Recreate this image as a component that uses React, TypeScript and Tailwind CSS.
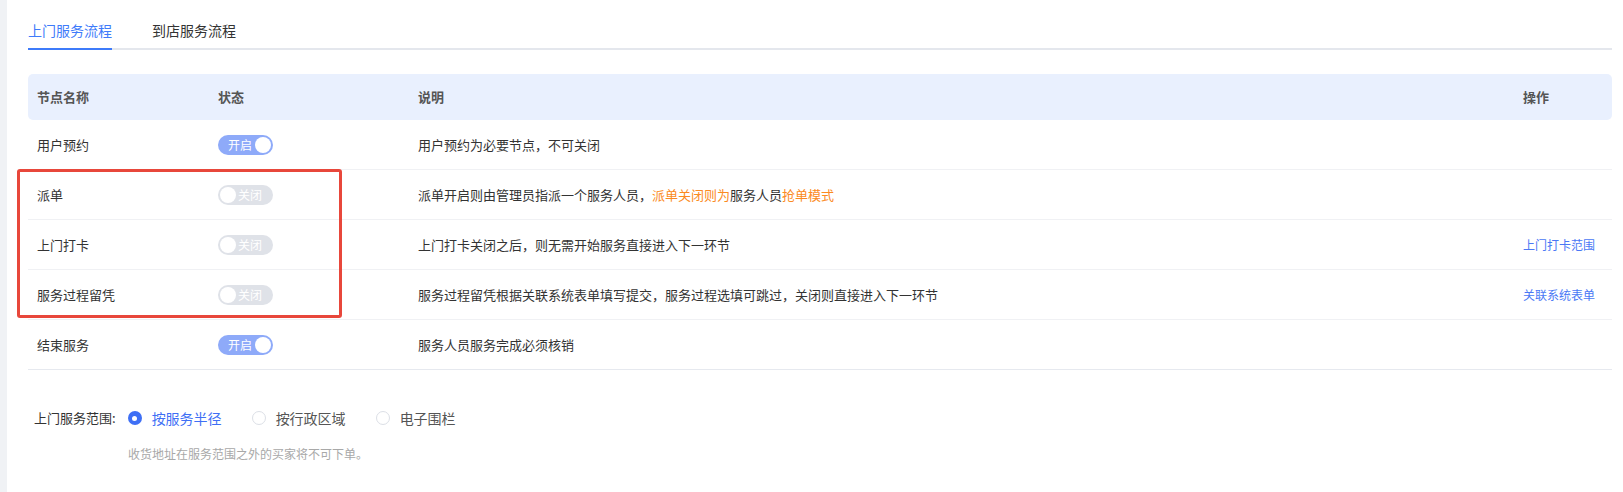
import React from "react";

const font = { fontFamily: '"Noto Sans CJK SC", "Noto Sans", sans-serif' };

function Toggle({ on }: { on: boolean }) {
  if (on) {
    return (
      <div className="flex h-[20px] w-[55px] items-center justify-between rounded-full bg-[#8eaaf9] pl-[10px] pr-[2px]">
        <span className="text-[12px] leading-none text-white">开启</span>
        <span className="h-[16px] w-[16px] rounded-full bg-white" />
      </div>
    );
  }
  return (
    <div className="flex h-[20px] w-[55px] items-center rounded-full bg-[#dfe2e8] pl-[2px]">
      <span className="h-[16px] w-[16px] rounded-full bg-white" />
      <span className="ml-[2px] text-[12px] leading-none text-white">关闭</span>
    </div>
  );
}

type Row = {
  name: string;
  on: boolean;
  desc: React.ReactNode;
  op?: string;
};

const rows: Row[] = [
  { name: "用户预约", on: true, desc: "用户预约为必要节点，不可关闭" },
  {
    name: "派单",
    on: false,
    desc: (
      <>
        派单开启则由管理员指派一个服务人员，
        <span className="text-[#fb8a22]">派单关闭则为</span>服务人员
        <span className="text-[#fb8a22]">抢单模式</span>
      </>
    ),
  },
  {
    name: "上门打卡",
    on: false,
    desc: "上门打卡关闭之后，则无需开始服务直接进入下一环节",
    op: "上门打卡范围",
  },
  {
    name: "服务过程留凭",
    on: false,
    desc: "服务过程留凭根据关联系统表单填写提交，服务过程选填可跳过，关闭则直接进入下一环节",
    op: "关联系统表单",
  },
  { name: "结束服务", on: true, desc: "服务人员服务完成必须核销" },
];

const cols = "grid grid-cols-[181px_200px_1fr_98px]";

function Radio({ label, checked }: { label: string; checked?: boolean }) {
  return (
    <div className="flex items-center">
      {checked ? (
        <span className="flex h-[14px] w-[14px] items-center justify-center rounded-full bg-[#3e6ff5]">
          <span className="h-[5px] w-[5px] rounded-full bg-white" />
        </span>
      ) : (
        <span className="h-[14px] w-[14px] rounded-full border border-[#dcdfe6] bg-white" />
      )}
      <span
        className={
          "ml-[10px] text-[14px] leading-[22px] " +
          (checked ? "text-[#3e6ff5]" : "text-[#555]")
        }
      >
        {label}
      </span>
    </div>
  );
}

export default function App() {
  return (
    <div className="flex min-h-[492px] bg-white" style={font}>
      <div className="w-[7px] shrink-0 bg-[#f0f2f5]" />
      <div className="flex-1 pl-[21px] pr-[11px]">
        {/* Tabs */}
        <div className="flex gap-[40px] border-b-2 border-[#e4e7ed] pt-[19px]">
          <div className="-mb-[2px] border-b-2 border-[#3e7bfa] pb-[7px] text-[14px] leading-[22px] text-[#3e7bfa]">
            上门服务流程
          </div>
          <div className="-mb-[2px] border-b-2 border-transparent pb-[7px] text-[14px] leading-[22px] text-[#333]">
            到店服务流程
          </div>
        </div>

        {/* Table */}
        <div className="relative mt-[24px]">
          <div
            className={
              cols +
              " h-[46px] items-center rounded-[5px] bg-[#e9f0fe] text-[13px] font-bold text-[#555]"
            }
          >
            <div className="px-[9px]">节点名称</div>
            <div className="px-[9px]">状态</div>
            <div className="px-[9px]">说明</div>
            <div className="px-[9px]">操作</div>
          </div>
          {rows.map((r, i) => (
            <div
              key={r.name}
              className={
                cols +
                " h-[50px] items-center border-b text-[13px] text-[#333] " +
                (i === rows.length - 1 ? "border-[#e6e9ef]" : "border-[#f0f1f4]")
              }
            >
              <div className="px-[9px]">{r.name}</div>
              <div className="px-[9px]">
                <Toggle on={r.on} />
              </div>
              <div className="px-[9px]">{r.desc}</div>
              <div className="px-[9px] text-[12px] text-[#4a78f5]">{r.op}</div>
            </div>
          ))}
          {/* Red highlight box */}
          <div className="pointer-events-none absolute left-[-11px] top-[95px] h-[149px] w-[325px] rounded-[3px] border-[3px] border-[#e8473b]" />
        </div>

        {/* Service range */}
        <div className="mt-[37px] flex items-center pl-[6px]">
          <span className="mr-[12px] text-[13px] leading-[22px] text-[#333]">上门服务范围:</span>
          <div className="flex items-center gap-[30px]">
            <Radio label="按服务半径" checked />
            <Radio label="按行政区域" />
            <Radio label="电子围栏" />
          </div>
        </div>
        <div className="mt-[16px] pl-[100px] text-[12px] leading-[18px] text-[#a8a8a8]">
          收货地址在服务范围之外的买家将不可下单。
        </div>
      </div>
    </div>
  );
}
